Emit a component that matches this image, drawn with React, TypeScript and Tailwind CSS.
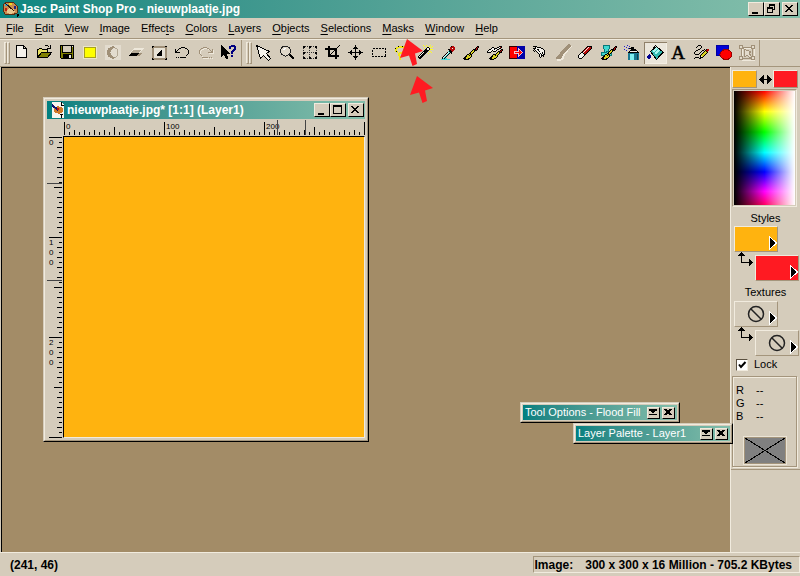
import { Fragment, ReactNode } from 'react';

interface Tool {
    name: string;
    icon: ReactNode;
    active?: boolean;
}

const COLORS: Record<string, string> = {
    k: '#000000',
    w: '#f4f1ea',
    n: '#000080',
    g: '#a09078',
    l: '#efe9dc',
    y: '#d8d020',
    s: '#ffff20',
    r: '#b80808',
    c: '#40d8d8',
};

// Draws an icon from rows of characters, one character per pixel
const Pixels = ({ rows, x = 3, y = 3 }: { rows: string[]; x?: number; y?: number }) => (
    <>
        {rows.map((row, j) =>
            row.split('').map((ch, i) =>
                COLORS[ch] ? <rect key={`${i}-${j}`} x={x + i} y={y + j} width="1" height="1" fill={COLORS[ch]} /> : null
            )
        )}
    </>
);

const undoRows = [
    '......kkkk....',
    '....kk....kk..',
    'k..k........k.',
    'k.k..........k',
    'kk...........k',
    'kkkkk........k',
    '.............k',
    '............k.',
    '...........k..',
    '..............',
    '.k.k.kkkkkk...',
];

const helpRows = [
    'k...............',
    'kk..............',
    'kkk.............',
    'kkkk............',
    'kkkkk...........',
    'kkkkkk..........',
    'kkkkkkk.........',
    'kkkkkkkk........',
    'kkkkkkkkk.......',
    'kkkkkk..........',
    'kk.kkk..........',
    'k...kkk.........',
    '....kkk.........',
    '.....kk.........',
];

const wandRows = [
    '......s..s...s..',
    '.......s..s.s..s',
    '..........kk.ss.',
    '.......s.kwwk...',
    '........kkwwksss',
    '.......kkkkk....',
    '......kkkkk.ss..',
    '.....kwkkk....s.',
    '....kwkkk..s....',
    '...kwkkk........',
    '..kwkkk.........',
    '.kwkkk..........',
    '.kkkk...........',
    '..kk............',
];

const dropperRows = [
    '...........krr..',
    '..........rrrrr.',
    '..........rrwrr.',
    '........kkrrrrr.',
    '.........kkrrr..',
    '........ckkkr...',
    '.......kwckk....',
    '......kwck.k....',
    '.....kwck.......',
    '....kwck........',
    '...kwck.........',
    '..kwck..........',
    '..kckcc.........',
    '.ccccccccc......',
];

const brushRows = [
    '..............kk',
    '.............krk',
    '............krk.',
    '..........kkkrk.',
    '.........kykkk..',
    '........kyyk....',
    '.......kyyk.....',
    '......kkyk......',
    '....kkykk.......',
    '...kyykyk.......',
    '..kkyyyyk.......',
    '.kkyyyyk........',
    'kkkyykk.........',
    '.kkkkk..........',
];

const cloneRows = [
    '............kkk.',
    '.....kk...kkwrk.',
    '....kwwkkkwwkk..',
    '..kkwwwkwwkk..kk',
    '.kwwwkwwwk...krk',
    'kwwwk.kkk..kkrk.',
    'kkkk......kykkk.',
    '.........kyyk...',
    '......kkkyyk....',
    '.....kyykyk.....',
    '....kkyyyyk.....',
    '...kkyyyyk......',
    '..kkkyykk.......',
    '...kkkk.........',
];

const handRows = [
    'kkkk............',
    '..kwkkkk........',
    'kkkwwwwwkk......',
    '.kwwkkwwwwk.....',
    'k.kwwkwwwwwk....',
    '.k.kwwkwwwwk....',
    '....kwwwwkwk....',
    '.....kwkwkwk....',
    '......kwkwkk....',
    '......kwkkk.....',
    '......kwk.k.....',
    '.......k........',
];

const eraserRows = [
    '..........kkkkk.',
    '.........krwrrk.',
    '........krwrrrk.',
    '.......krwrrrk..',
    '......krwrrrk...',
    '.....krwrrrk....',
    '....kkwrrrk.....',
    '...kwwkrrk......',
    '..kwwwwkk.......',
    '.kwwwwwk........',
    '.kwwwwk.........',
    '.kwwwk..........',
    '..kkk...........',
];

const drawRows = [
    '.....kkk........',
    '....k...k.......',
    '...k....k.......',
    '.......k........',
    '.....kk....k.krr',
    '...kk....kk.krrr',
    '..k.....k..kykr.',
    '.k.....k..kyyyk.',
    '.k....k..kyyyk..',
    '..kkkk..kyyyk...',
    '.......kyyyk....',
    '.......kwyk.....',
    '..kkkk.kkk......',
    '.k....kk........',
];

const fileTools: Tool[] = [
    {
        name: 'New',
        icon: <path d="M5.5 3.5h7l3 3v9h-10zM12.5 3.5v3h3" fill="#f4f1ea" stroke="#000" />,
    },
    {
        name: 'Open',
        icon: (
            <>
                <path d="M3.5 15.5v-8h1l1-1h2l1 1h5v3h-6z" fill="#e8e060" stroke="#000" />
                <path d="M3.5 15.5l4-5h10l-4 5z" fill="#808000" stroke="#000" />
                <path d="M10.5 4.5l1-1h2l2 2M16.5 3v3.5h-3.5" fill="none" stroke="#000" />
            </>
        ),
    },
    {
        name: 'Save',
        icon: (
            <>
                <path d="M3.5 3.5h13v13h-12l-1-1z" fill="#808000" stroke="#000" />
                <path d="M6 4h8v6h-8z" fill="#d5ccbb" />
                <path d="M5.5 4v6.5h9V4" fill="none" stroke="#000" />
                <path d="M6 12h9v5h-9z" fill="#000" />
                <path d="M12 13h2v3h-2zM15 4h1v1h-1z" fill="#e8e4dc" />
            </>
        ),
    },
    {
        name: 'Full Screen',
        icon: (
            <>
                <path d="M3 4h14v13H3z" fill="#ece6c8" />
                <path d="M4 5h12v11H4z" fill="#a8a020" />
                <path d="M5 6h10v9H5z" fill="#ffff00" />
            </>
        ),
    },
    {
        name: 'Normal View',
        icon: (
            <>
                <path d="M2 3h16v15H2z" fill="#e3dccf" />
                <path d="M13 5c-5-2-9 1-9 5.500s4 7.500 9 5.500c-4-1-5.500-3-5.500-5.500S9 6 13 5z" fill="#a09078" />
                <path d="M12 6l2 1 1 3-1 4-2 2" fill="none" stroke="#b5aa96" />
            </>
        ),
    },
    {
        name: 'Preview',
        icon: (
            <>
                <path d="M8 6h10l-5 5H3z" fill="#eee8db" />
                <path d="M7 8h8l-3 3H4z" fill="#b5aa96" />
                <path d="M5 11h8l-3 3H3z" fill="#000" />
                <path d="M13 11h3l-3 3h-3z" fill="#a09078" />
            </>
        ),
    },
    {
        name: 'Color Depth',
        icon: (
            <>
                <path d="M3 4h15v14H3z" fill="#a09078" />
                <path d="M5 6h11v10H5z" fill="#e9e3d6" />
                <path d="M13 7v7H8l1-3 2-1z" fill="#000" />
                <path d="M3 4h2v1H4v1H3zM16 4h2v1h-2zM3 16h1v1h1v1H3zM17 16h1v2h-2v-1h1z" fill="#000" />
            </>
        ),
    },
    { name: 'Undo', icon: <Pixels rows={undoRows} y={5} /> },
    {
        name: 'Redo',
        icon: (
            <>
                <Pixels rows={undoRows.map((r) => r.split('').reverse().join('').replace(/k/g, 'l'))} x={5} y={6} />
                <Pixels rows={undoRows.map((r) => r.split('').reverse().join('').replace(/k/g, 'g'))} x={4} y={5} />
            </>
        ),
    },
    {
        name: 'Help',
        icon: (
            <>
                <Pixels rows={helpRows} />
                <path d="M11 6V4h2V3h4v1h1v4h-1v1h-1v1h-1v2h-2V9h1V8h1V7h1V5h-3v2h-2zM13 13h2v2h-2z" fill="#000080" />
            </>
        ),
    },
];

const paintTools: Tool[] = [
    {
        name: 'Arrow',
        icon: <path d="M3.5 3.5l13 6-3 2 4 5-2 2-5-5-3 3z" fill="#f4f1ea" stroke="#000" />,
    },
    {
        name: 'Zoom',
        icon: (
            <>
                <path d="M13 12l5 5" stroke="#000" strokeWidth="2" />
                <circle cx="9.5" cy="9" r="5" fill="#dfd7c8" stroke="#222" />
                <path d="M7 8l3-2" stroke="#fff" />
            </>
        ),
    },
    {
        name: 'Deformation',
        icon: (
            <>
                <path d="M4 4.5h14M4 10.5h14M4 16.5h14M4.5 4v13M10.5 4v13M17.5 4v13" stroke="#333" strokeDasharray="1 1" />
                <path d="M4 4h2v2H4zM10 4h2v2h-2zM16 4h2v2h-2zM4 10h2v2H4zM16 10h2v2h-2zM4 15h2v2H4zM10 15h2v2h-2zM16 15h2v2h-2z" fill="#000" />
            </>
        ),
    },
    {
        name: 'Crop',
        icon: (
            <>
                <path d="M7 4v10h10M3 7h11v10" fill="none" stroke="#000" strokeWidth="2" />
                <path d="M8 13l10-10" stroke="#000" />
            </>
        ),
    },
    {
        name: 'Mover',
        icon: (
            <path
                d="M10 4h1v6h6v1h-6v6h-1v-6H4v-1h6zM9 5h3v1H9zM8 6h5v1H8zM9 15h3v1H9zM8 14h5v1H8zM5 9h1v3H5zM6 8h1v5H6zM15 9h1v3h-1zM14 8h1v5h-1zM10 3h1v1h-1zM10 17h1v1h-1zM3 10h1v1H3zM17 10h1v1h-1z"
                fill="#000"
            />
        ),
    },
    {
        name: 'Selection',
        icon: <path d="M4.5 6.5h13v8h-13z" fill="none" stroke="#000" strokeDasharray="2 1" />,
    },
    {
        name: 'Freehand',
        icon: (
            <>
                <path d="M7 10c-4-1-3-5 3-5s8 4 4 5c-3 1-6 0-6 2 0 3 2 3 1 6" fill="none" stroke="#f0e818" strokeWidth="2" />
                <path d="M6 10c-4-2-2-6 4-6s8 5 3 7c-2 1-4 0-4-2" fill="none" stroke="#000" strokeDasharray="1 3" />
            </>
        ),
    },
    { name: 'Magic Wand', icon: <Pixels rows={wandRows} /> },
    { name: 'Dropper', icon: <Pixels rows={dropperRows} y={4} /> },
    { name: 'Paint Brush', icon: <Pixels rows={brushRows} y={4} /> },
    { name: 'Clone Brush', icon: <Pixels rows={cloneRows} x={4} y={4} /> },
    {
        name: 'Color Replacer',
        icon: (
            <>
                <path d="M3.5 4.5h8v12h-8z" fill="#ff0000" stroke="#300" />
                <path d="M11 4h8v13h-8z" fill="#0000a8" />
                <path d="M8.500 9.500h4v-3l4 4-4 4v-3h-4z" fill="#ff0000" stroke="#f0c0d0" />
            </>
        ),
    },
    { name: 'Retouch', icon: <Pixels rows={handRows} x={4} y={4} /> },
    {
        name: 'Scratch Remover',
        icon: (
            <>
                <path d="M5 18h3l3-2 1-4 7-8" stroke="#efe9dc" fill="none" strokeWidth="2" />
                <path d="M4 16l2-3 3-2 2 2-1 3-3 1H4z" fill="#a09078" />
                <path d="M9 12l9-9" stroke="#a09078" strokeWidth="3" />
            </>
        ),
    },
    { name: 'Eraser', icon: <Pixels rows={eraserRows} x={2} y={4} /> },
    {
        name: 'Picture Tube',
        icon: (
            <>
                <path d="M5.500 3.500h6v3l-1 1v3h3v3h-10v-3h3v-3l-1-1z" fill="#40d8d0" stroke="#087878" />
                <Pixels rows={brushRows} y={4} />
                <path d="M5.500 3.500h6v3l-1 1v2l-4 1v-3l-1-1z" fill="#40d8d0" stroke="#087878" />
            </>
        ),
    },
    {
        name: 'Airbrush',
        icon: (
            <>
                <path d="M3 4h1v1H3zM6 3h1v1H6zM5 5h1v1H5zM3 7h1v1H3zM8 4h1v1H8zM7 6h1v1H7zM5 8h1v1H5z" fill="#2020d0" />
                <path d="M10 5h3v2h2v1h-5V7H8V6h2z" fill="#000" />
                <path d="M7.500 10.500l2-2h6l2 2z" fill="#f4f1ea" stroke="#000" />
                <path d="M7 11h11v7H7z" fill="#187890" />
                <path d="M9 12h4v6H9z" fill="#80f0f0" />
                <path d="M16 12h1v6h-1z" fill="#104050" />
            </>
        ),
    },
    {
        name: 'Flood Fill',
        active: true,
        icon: (
            <>
                <path d="M6.500 9.500l6-5 7 6-7 7z" fill="#30b8b0" stroke="#000" />
                <path d="M9 10l4-4M11 12l4-4" stroke="#a8f8f0" strokeWidth="2" />
                <path d="M10 5h2M8 8l4-5M14 15l5-5" stroke="#000" />
                <path d="M5 12h1v1h1v3H6v1H4v-1H3v-2h1v-1h1z" fill="#000090" />
            </>
        ),
    },
    {
        name: 'Text',
        icon: (
            <text x="11" y="17" textAnchor="middle" fontSize="19" fontFamily="'Liberation Serif', serif" fill="#000" stroke="#000" strokeWidth="0.5">
                A
            </text>
        ),
    },
    { name: 'Draw', icon: <Pixels rows={drawRows} y={3} /> },
    {
        name: 'Preset Shapes',
        icon: (
            <>
                <path d="M3.500 3.500h12v10h-12z" fill="#0000d8" stroke="#0000a0" />
                <ellipse cx="13" cy="12.500" rx="6" ry="5" fill="#ff0000" stroke="#900" />
            </>
        ),
    },
    {
        name: 'Object Selector',
        icon: (
            <>
                <path d="M6.500 6.500h12v12h-12z" fill="none" stroke="#efe9dc" />
                <path d="M5.500 5.500h11v11h-11z" fill="none" stroke="#a09078" />
                <path d="M3.500 3.500h3v3h-3zM15.500 3.500h3v3h-3zM3.500 14.500h3v3h-3zM15.500 14.500h3v3h-3z" fill="#e3dbcc" stroke="#a09078" />
                <path d="M8 7l7 3-2 1 3 4-2 1-3-3-2 2z" fill="#e3dbcc" stroke="#a09078" />
            </>
        ),
    },
];

const menus = [
    { label: 'File', key: 0 },
    { label: 'Edit', key: 0 },
    { label: 'View', key: 0 },
    { label: 'Image', key: 0 },
    { label: 'Effects', key: 5 },
    { label: 'Colors', key: 0 },
    { label: 'Layers', key: 0 },
    { label: 'Objects', key: 0 },
    { label: 'Selections', key: 0 },
    { label: 'Masks', key: 0 },
    { label: 'Window', key: 0 },
    { label: 'Help', key: 0 },
];

const glyphs: Record<string, string> = {
    Minimize: 'M3 9h6v2H3z',
    Maximize: 'M2 1h9v9H2zM3 3v6h7V3z',
    Restore: 'M4 1h6v6H8v3H2V4h2zM5 3v1h3v2h1V3zM3 6v3h4V6z',
    Close: 'M2 2h2v1h1v1h2V3h1V2h2v1H9v1H8v1H7v1h1v1h1v1h1v1H8V8H7V7H5v1H4v1H2V8h1V7h1V6h1V5H4V4H3V3H2z',
    'Roll up': 'M1 1h8v2H7v1H6v1H4V4H3V3H1zM1 6h8v1H1z',
    'Close palette': 'M1 1h3v1h2V1h3v1H8v1H7v2h1v1h1v1H6V6H4v1H1V6h1V5h1V3H2V2H1z',
};

const WindowButton = ({ name, small }: { name: string; small?: boolean }) => (
    <button
        type="button"
        aria-label={name}
        className={
            small
                ? 'h-3 w-[13px] border border-t-[#f1ebde] border-r-black border-b-black border-l-[#f1ebde] bg-[#d5ccbb]'
                : 'h-3.5 w-4 border border-t-[#f1ebde] border-r-black border-b-black border-l-[#f1ebde] bg-[#d5ccbb]'
        }
    >
        <svg className="block" width={small ? 11 : 14} height={small ? 10 : 12} shapeRendering="crispEdges">
            <path d={glyphs[name]} fillRule="evenodd" />
        </svg>
    </button>
);

const AppIcon = () => (
    <svg width="17" height="16" viewBox="0 0 17 16" shapeRendering="crispEdges" aria-hidden="true">
        <path d="M1 4l4-3 7 1 4 4-1 6-5 2-7-1-2-4z" fill="#c88c50" stroke="#5a2c10" />
        <path d="M5 9l3-2 4 1 1 3-4 2-4-1z" fill="#e8c890" />
        <path d="M3 3h3v2H3z" fill="#30a0d0" />
        <path d="M7 2h3v2H7z" fill="#f0d820" />
        <path d="M3 7h2v3H3z" fill="#c02010" />
        <path d="M12 5h2v3h-2z" fill="#202080" />
        <path d="M3 2l9 8" stroke="#301808" strokeWidth="1" />
        <path d="M15 13h2v2h-1v1h-1z" fill="#000" />
    </svg>
);

const DocumentIcon = () => (
    <svg width="14" height="16" viewBox="0 0 14 16" shapeRendering="crispEdges" aria-hidden="true">
        <path d="M1 0h9l3 3v13H1z" fill="#f7f4ee" />
        <path d="M10 0v3h3" fill="none" stroke="#000" />
        <path d="M3 6l4-2 5 2v4l-4 2-5-2z" fill="#d07828" />
        <path d="M1 3l6 5" stroke="#101070" strokeWidth="2" />
        <path d="M6 6h2v2H6z" fill="#c01010" />
        <path d="M9 12h3v1h-1v3h-1v-3H9z" fill="#000" />
    </svg>
);

const Toolbar = ({ tools, label }: { tools: Tool[]; label: string }) => (
    <div role="toolbar" aria-label={label} className="flex items-center border-r border-[#a4957c] pl-1">
        <span className="h-[22px] w-[3px] border border-t-[#f1ebde] border-r-[#a4957c] border-b-[#a4957c] border-l-[#f1ebde]" />
        <span className="mr-px h-[22px] w-[3px] border border-t-[#f1ebde] border-r-[#a4957c] border-b-[#a4957c] border-l-[#f1ebde]" />
        {tools.map((tool) => (
            <button
                key={tool.name}
                type="button"
                aria-label={tool.name}
                className={
                    tool.active
                        ? 'h-[22px] w-[23px] bg-[#ebe6db] shadow-[inset_1px_1px_#8f8069,inset_-1px_-1px_#f4efe4]'
                        : 'h-[22px] w-[23px]'
                }
            >
                <svg className="block" width="23" height="22" viewBox="0 0 23 22" shapeRendering="crispEdges">
                    {tool.icon}
                </svg>
            </button>
        ))}
    </div>
);

const tickSize = (n: number) => (n % 100 === 0 ? 13 : n % 50 === 0 ? 8 : n % 10 === 0 ? 5 : 3);
const ticks = Array.from({ length: 61 }, (_, i) => i * 5);

const HorizontalRuler = () => (
    <svg width="302" height="17" shapeRendering="crispEdges" className="block" aria-hidden="true">
        {ticks.map((n) => (
            <rect key={n} x={n + 1} y={16 - tickSize(n)} width="1" height={tickSize(n)} />
        ))}
        {[0, 100, 200].map((n) => (
            <text key={n} x={n + 3} y="10" fontSize="8" fontFamily="'Liberation Sans', sans-serif">
                {n}
            </text>
        ))}
        <path d="M214 1h1v15h-1zM242 1h1v15h-1z" fill="#444" />
    </svg>
);

const VerticalRuler = () => (
    <svg width="16" height="302" shapeRendering="crispEdges" className="block" aria-hidden="true">
        {ticks.map((n) => (
            <rect key={n} x={15 - tickSize(n)} y={n + 1} width={tickSize(n)} height="1" />
        ))}
        {[0, 100, 200].map((n) => (
            <Fragment key={n}>
                {String(n).split('').map((digit, i) => (
                    <text key={i} x="2" y={n + 9 + i * 10} fontSize="8" fontFamily="'Liberation Sans', sans-serif">
                        {digit}
                    </text>
                ))}
            </Fragment>
        ))}
        <path d="M0 47h15v1H0zM0 144h15v1H0z" fill="#444" />
    </svg>
);

const ImageWindow = () => (
    <section className="absolute top-[29px] left-[41px] border border-t-[#d5ccbb] border-r-black border-b-black border-l-[#d5ccbb] bg-[#d5ccbb]">
        <div className="border border-t-[#f1ebde] border-r-[#a4957c] border-b-[#a4957c] border-l-[#f1ebde] p-0.5">
            <header className="flex h-[18px] items-center bg-linear-to-r from-[#008080] to-[#84bfab] pr-px pl-1">
                <DocumentIcon />
                <h2 className="flex-1 pl-0.5 text-[12px] leading-[18px] font-bold text-white">nieuwplaatje.jpg* [1:1] (Layer1)</h2>
                <WindowButton name="Minimize" />
                <WindowButton name="Maximize" />
                <span className="w-0.5" />
                <WindowButton name="Close" />
            </header>
            <div className="grid grid-cols-[16px_auto]">
                <span />
                <HorizontalRuler />
                <VerticalRuler />
                <div className="border-t border-r border-b border-l border-t-black border-r-[#f1ebde] border-b-[#f1ebde] border-l-black bg-[#ffb30f]" />
            </div>
        </div>
    </section>
);

const Palette = ({ title, place }: { title: string; place: string }) => (
    <section className={`absolute w-40 border border-t-[#d5ccbb] border-r-black border-b-black border-l-[#d5ccbb] bg-[#d5ccbb] ${place}`}>
        <div className="border border-t-[#f1ebde] border-r-[#a4957c] border-b-[#a4957c] border-l-[#f1ebde] p-px">
            <header className="flex h-[15px] items-center gap-0.5 bg-linear-to-r from-[#008080] to-[#84bfab] px-0.5">
                <h2 className="flex-1 text-[11px] leading-[15px] whitespace-nowrap text-white">{title}</h2>
                <WindowButton name="Roll up" small />
                <WindowButton name="Close palette" small />
            </header>
        </div>
    </section>
);

const RedArrow = ({ place }: { place: string }) => (
    <svg className={`pointer-events-none absolute z-20 ${place}`} width="24" height="28" aria-hidden="true">
        <path d="M8 0L24 12 16 14.500 18 25 13.500 27 10 16.500 1 19z" fill="#ff1a22" />
    </svg>
);

const Chevron = () => (
    <svg className="absolute right-0 bottom-px" width="8" height="14" shapeRendering="crispEdges" aria-hidden="true">
        <path d="M0.500 0.500l7 6.500-7 6.500z" fill="#000" stroke="#fff" />
    </svg>
);

const NoTexture = () => (
    <svg className="mx-auto block" width="18" height="18" aria-hidden="true">
        <circle cx="9" cy="9" r="7.500" fill="none" stroke="#222" strokeWidth="1.500" />
        <path d="M4 4l10 10" stroke="#222" strokeWidth="1.500" />
    </svg>
);

const LinkArrow = () => (
    <svg className="block" width="21" height="16" shapeRendering="crispEdges" aria-hidden="true">
        <path d="M7 0h1v1h1v1h1v1h1v1H8v6h7V7h1v1h1v1h1v1h1v1h-1v1h-1v1h-1v1h-1v-3H7V4H4V3h1V2h1V1h1z" />
    </svg>
);

const Swatch = ({ name, color, children }: { name: string; color: string; children?: ReactNode }) => (
    <button
        type="button"
        aria-label={name}
        className={`relative h-[26px] w-11 border border-t-[#f1ebde] border-r-[#a4957c] border-b-[#a4957c] border-l-[#f1ebde] ${color}`}
    >
        {children}
        <Chevron />
    </button>
);

const SwatchPair = ({ name, first, second, children }: { name: string; first: string; second: string; children?: ReactNode }) => (
    <div className="pl-[3px]">
        <Swatch name={`${name} 1`} color={first}>{children}</Swatch>
        <div className="flex">
            <LinkArrow />
            <div className="pt-[3px]">
                <Swatch name={`${name} 2`} color={second}>{children}</Swatch>
            </div>
        </div>
    </div>
);

const ColorPanel = () => (
    <aside className="flex w-[70px] shrink-0 flex-col border-l border-[#f1ebde] pt-[3px] text-[11px] leading-[13px] [&_button]:block">
        <div className="flex items-center justify-between pr-0.5 pl-px">
            <button type="button" aria-label="Foreground color" className="h-[18px] w-[25px] border border-t-[#f1ebde] border-r-[#a4957c] border-b-[#a4957c] border-l-[#f1ebde] bg-[#ffb30f]" />
            <svg width="13" height="9" shapeRendering="crispEdges" aria-hidden="true">
                <path d="M0 4h1V3h1V2h1V1h1V0h1v4h3V0h1v1h1v1h1v1h1v1h1v1h-1v1h-1v1h-1v1H9v1H8V5H5v4H4V8H3V7H2V6H1V5H0z" />
            </svg>
            <button type="button" aria-label="Background color" className="h-[18px] w-[25px] border border-t-[#f1ebde] border-r-[#a4957c] border-b-[#a4957c] border-l-[#f1ebde] bg-[#ff1a22]" />
        </div>
        <div className="mt-px mr-[3px] ml-px h-[118px] border border-t-[#a4957c] border-r-[#f1ebde] border-b-[#f1ebde] border-l-[#a4957c] p-px">
            <div className="h-full bg-[linear-gradient(to_right,#000,transparent_50%,#fff),linear-gradient(#f00,#ff0_18%,#0f0_36%,#0ff_54%,#00f_71%,#f0f_88%,#ff0060)]" />
        </div>
        <p className="mt-[5px] mb-px text-center">Styles</p>
        <SwatchPair name="Style" first="bg-[#ffb30f]" second="bg-[#ff1a22]" />
        <p className="mt-[5px] mb-0.5 text-center">Textures</p>
        <SwatchPair name="Texture" first="bg-[#d5ccbb]" second="bg-[#d5ccbb]">
            <NoTexture />
        </SwatchPair>
        <label className="mt-0.5 flex h-[13px] items-center gap-1.5 pl-[5px]">
            <span className="relative h-3 w-3">
                <input
                    type="checkbox"
                    defaultChecked
                    className="peer block h-3 w-3 appearance-none border border-t-[#5a5040] border-r-[#f1ebde] border-b-[#f1ebde] border-l-[#5a5040] bg-white"
                />
                <svg className="pointer-events-none absolute inset-0 hidden peer-checked:block" width="12" height="12" aria-hidden="true">
                    <path d="M3 5.500l2 2.500 4.500-5" fill="none" stroke="#000" strokeWidth="2" />
                </svg>
            </span>
            Lock
        </label>
        <div className="mt-[5px] mr-[3px] ml-px border border-[#a4957c] shadow-[1px_1px_#f1ebde,inset_1px_1px_#f1ebde]">
            <dl className="grid grid-cols-[20px_1fr] px-[3px] pt-[7px] pb-3.5">
                <dt>R</dt>
                <dd>--</dd>
                <dt>G</dt>
                <dd>--</dd>
                <dt>B</dt>
                <dd>--</dd>
            </dl>
            <svg className="mx-auto mb-0.5 block border border-[#a4957c] bg-[#808080] outline outline-[#ebe4d6]" width="42" height="27" shapeRendering="crispEdges" aria-hidden="true">
                <path d="M0 0l40 25M40 0L0 25" stroke="#000" />
            </svg>
        </div>
        <div className="mt-0.5 border-t border-[#a4957c] shadow-[inset_0_1px_#f1ebde]" />
    </aside>
);

const App = () => (
    <div className="relative flex min-h-screen flex-col overflow-hidden bg-[#d5ccbb] font-['Liberation_Sans',Arial,sans-serif] text-black">
        <header className="flex h-[18px] items-center bg-linear-to-r from-[#078681] to-[#84bfab] pr-0.5 pl-0.5">
            <AppIcon />
            <h1 className="flex-1 pl-px text-[12px] leading-[18px] font-bold text-white">Jasc Paint Shop Pro - nieuwplaatje.jpg</h1>
            <WindowButton name="Minimize" />
            <WindowButton name="Restore" />
            <span className="w-0.5" />
            <WindowButton name="Close" />
        </header>
        <nav className="flex h-[21px] items-center gap-[11px] border-b border-[#a4957c] pl-1.5 text-[11px]">
            {menus.map(({ label, key }) => (
                <button key={label} type="button">
                    {label.slice(0, key)}
                    <span className="underline underline-offset-2">{label[key]}</span>
                    {label.slice(key + 1)}
                </button>
            ))}
        </nav>
        <div className="flex h-7 border-t border-b border-t-[#f1ebde] border-b-[#a4957c]">
            <Toolbar tools={fileTools} label="Standard" />
            <Toolbar tools={paintTools} label="Tools" />
        </div>
        <div className="flex flex-1">
            <main className="relative z-10 ml-px flex-1 border-t border-l border-black bg-[#a38c67]">
                <ImageWindow />
                <Palette title="Tool Options - Flood Fill" place="top-[334px] left-[518px]" />
                <Palette title="Layer Palette - Layer1" place="top-[355px] left-[571px]" />
            </main>
            <ColorPanel />
        </div>
        <footer className="flex h-6 items-center justify-between border-t border-[#f1ebde] pl-2.5 text-[12px] font-bold">
            <span>(241, 46)</span>
            <span className="flex h-[17px] items-center gap-3 border border-t-[#a4957c] border-r-[#f1ebde] border-b-[#f1ebde] border-l-[#a4957c] pr-[7px] pl-px whitespace-nowrap">
                <span>Image:</span>
                <span>300 x 300 x 16 Million - 705.2 KBytes</span>
            </span>
        </footer>
        <RedArrow place="top-[39px] left-[399px]" />
        <RedArrow place="top-[76px] left-[409px]" />
    </div>
);

export default App;
